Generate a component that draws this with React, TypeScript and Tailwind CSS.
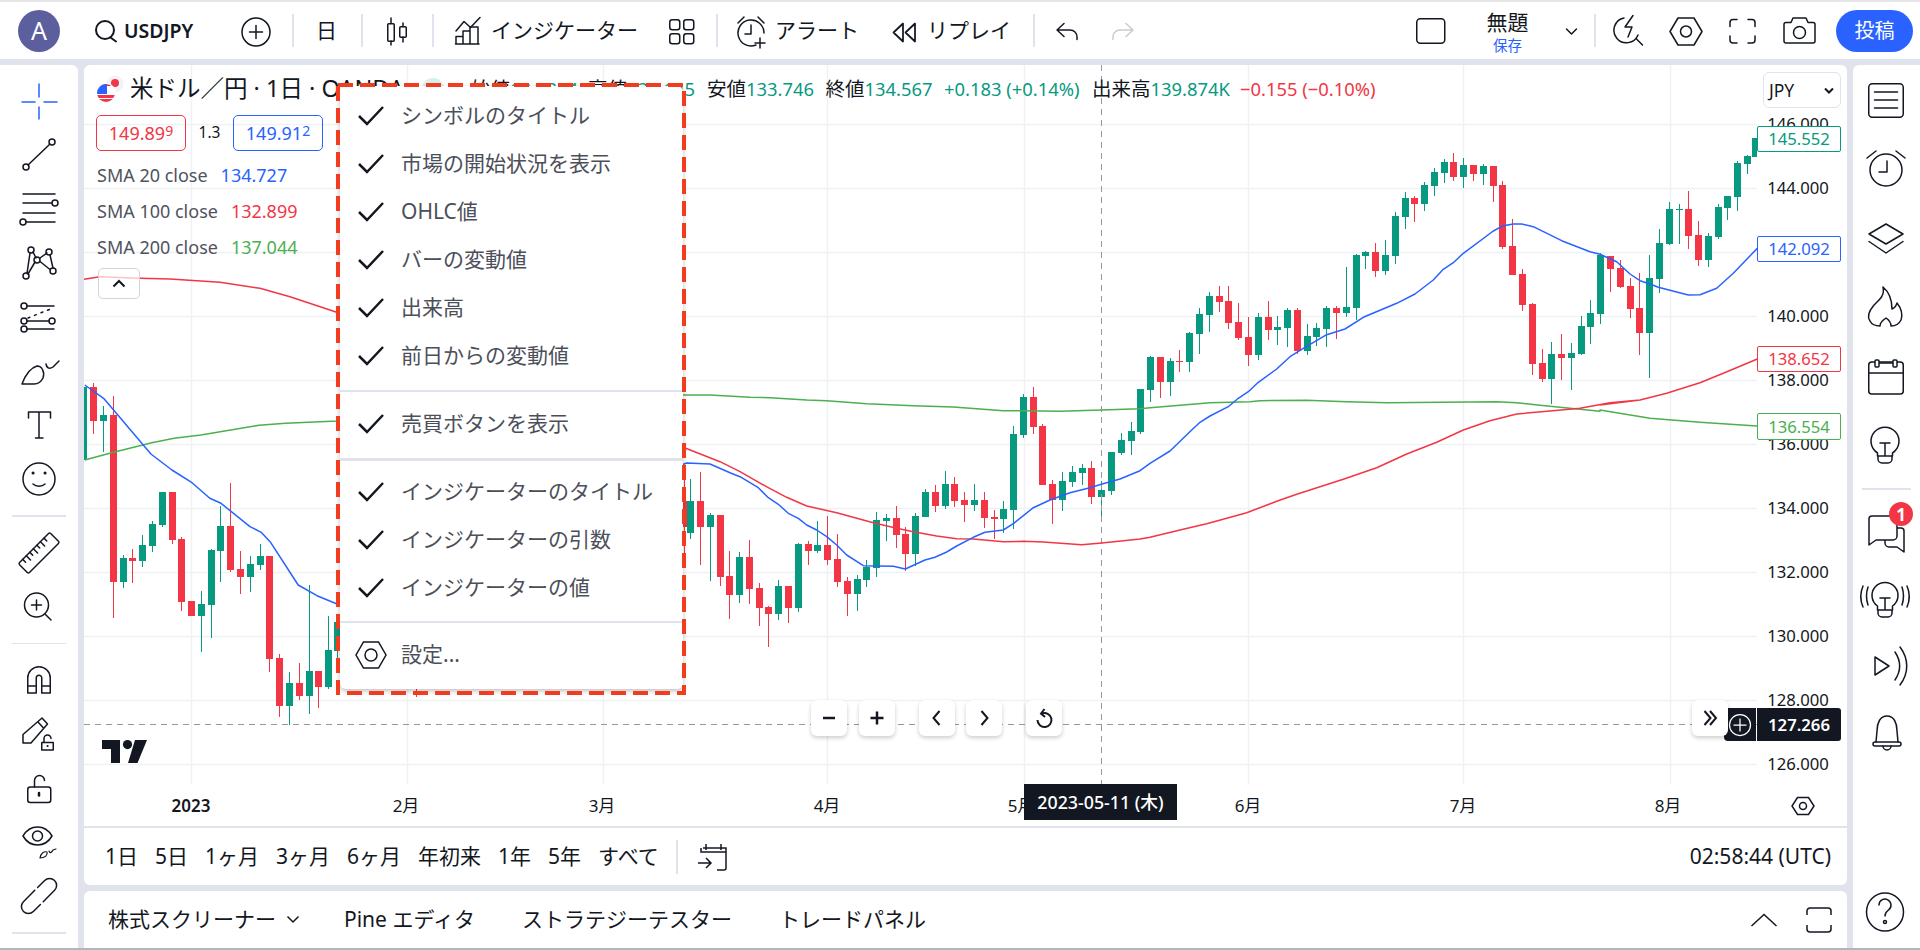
import type { ReactNode } from "react";

const TEAL = "#089981";
const RED = "#f23645";
const BLUE = "#2962ff";
const GREEN = "#4caf50";

type Row = [number, number, number, number, number, "g" | "r"];

// candles as [x, high, bodyTop, bodyBottom, low, colour], read off crops at 3x
const frame = (ox: number, oy: number, s: number, rows: Row[]) =>
  rows.map(([x, h, t, b, l, c]) => ({
    x: Math.floor(ox + x / s),
    h: Math.round(oy + h / s),
    t: Math.round(oy + t / s),
    b: Math.round(oy + b / s),
    l: Math.round(oy + l / s),
    c: c === "g" ? TEAL : RED,
  }));

const candles = [
  ...frame(0, 0, 1, [
    [83, 387, 387, 460, 460, "g"], [93, 383, 387, 421, 434, "r"], [103, 406, 415, 421, 452, "g"],
    [113, 396, 415, 582, 618, "r"], [123, 555, 558, 582, 588, "g"], [132, 549, 558, 561, 583, "r"],
    [142, 535, 545, 561, 567, "g"], [152, 521, 524, 546, 552, "g"], [162, 492, 492, 525, 527, "g"],
    [172, 492, 492, 540, 544, "r"], [181, 537, 539, 602, 611, "r"], [191, 601, 601, 616, 616, "r"],
    [201, 591, 604, 616, 652, "g"], [211, 549, 550, 605, 638, "g"], [220, 506, 526, 551, 582, "g"],
    [230, 483, 526, 570, 572, "r"], [240, 551, 569, 577, 594, "r"], [250, 556, 564, 577, 592, "g"],
    [260, 544, 556, 565, 570, "g"], [269, 556, 556, 659, 672, "r"], [279, 654, 658, 706, 717, "r"],
    [289, 672, 683, 706, 725, "g"], [299, 663, 683, 696, 700, "r"], [309, 585, 671, 696, 714, "g"],
    [318, 671, 671, 687, 708, "r"], [328, 616, 650, 687, 689, "g"], [337, 622, 622, 651, 660, "g"],
    [416, 680, 680, 680, 697, "r"], [684, 472, 501, 527, 560, "r"],
  ]),
  ...frame(680, 340, 3, [
    [31, 417, 483, 579, 597, "g"], [61, 396, 483, 561, 675, "r"], [91, 519, 525, 561, 723, "g"],
    [121, 525, 525, 711, 738, "r"], [148, 633, 708, 765, 837, "r"], [178, 636, 651, 765, 789, "g"],
    [208, 600, 651, 747, 792, "r"], [238, 729, 744, 804, 858, "r"], [265, 798, 801, 822, 921, "r"],
    [295, 720, 738, 822, 840, "g"], [325, 738, 738, 804, 849, "r"], [355, 609, 612, 804, 816, "g"],
    [385, 603, 612, 633, 675, "r"], [412, 543, 615, 633, 639, "g"], [442, 528, 615, 660, 675, "r"],
    [472, 582, 657, 726, 741, "r"], [502, 711, 723, 762, 828, "r"], [532, 705, 717, 762, 813, "g"],
    [559, 660, 681, 720, 741, "g"], [589, 516, 540, 684, 711, "g"], [619, 522, 534, 543, 603, "g"],
    [649, 498, 534, 585, 624, "r"], [676, 561, 582, 642, 693, "r"], [706, 519, 528, 642, 678, "g"],
    [736, 447, 456, 531, 531, "g"], [766, 435, 456, 498, 516, "r"], [796, 393, 432, 498, 507, "g"],
    [823, 411, 432, 483, 501, "r"], [853, 456, 480, 495, 546, "r"], [883, 432, 480, 495, 513, "g"],
    [913, 456, 480, 534, 564, "r"], [943, 510, 531, 537, 597, "r"], [970, 483, 507, 537, 579, "g"],
    [1000, 258, 282, 510, 567, "g"], [1030, 162, 171, 285, 294, "g"], [1060, 141, 171, 261, 282, "r"],
    [1087, 252, 258, 435, 435, "r"], [1117, 420, 432, 480, 552, "r"], [1147, 396, 423, 480, 513, "g"],
    [1177, 378, 396, 426, 441, "g"], [1207, 372, 384, 399, 435, "g"], [1234, 363, 384, 471, 492, "r"],
    [1264, 423, 450, 471, 528, "g"], [1294, 336, 336, 453, 465, "g"], [1324, 279, 300, 339, 345, "g"],
    [1354, 246, 273, 303, 345, "g"], [1381, 147, 147, 276, 282, "g"], [1411, 48, 51, 150, 186, "g"],
    [1441, 51, 51, 126, 174, "r"], [1471, 54, 63, 126, 168, "g"],
  ]),
  ...frame(1150, 130, 3, [
    [88, 660, 693, 696, 726, "r"], [118, 606, 609, 696, 726, "g"], [148, 534, 552, 612, 672, "g"],
    [178, 486, 498, 555, 606, "g"], [208, 468, 498, 516, 546, "r"], [235, 468, 513, 579, 597, "r"],
    [265, 519, 576, 624, 630, "r"], [295, 561, 621, 675, 708, "r"], [325, 549, 561, 675, 690, "g"],
    [355, 513, 561, 600, 630, "r"], [382, 558, 591, 600, 645, "g"], [412, 534, 540, 594, 651, "g"],
    [442, 534, 540, 663, 672, "r"], [472, 582, 618, 663, 675, "g"], [499, 579, 594, 621, 648, "g"],
    [529, 528, 534, 597, 651, "g"], [559, 528, 534, 549, 627, "r"], [589, 411, 531, 549, 561, "g"],
    [619, 372, 375, 534, 570, "g"], [646, 363, 366, 378, 417, "g"], [676, 339, 366, 423, 441, "r"],
    [706, 330, 375, 423, 435, "g"], [736, 246, 258, 378, 402, "g"], [766, 186, 204, 261, 297, "g"],
    [793, 198, 204, 222, 276, "r"], [823, 156, 165, 222, 243, "g"], [853, 114, 126, 168, 198, "g"],
    [883, 87, 96, 129, 159, "g"], [910, 69, 96, 141, 153, "r"], [940, 84, 105, 141, 174, "g"],
    [970, 105, 105, 132, 153, "r"], [1000, 102, 108, 132, 165, "g"], [1030, 108, 108, 168, 216, "r"],
    [1057, 153, 165, 351, 357, "r"], [1087, 267, 348, 435, 435, "r"], [1117, 417, 432, 525, 543, "r"],
    [1147, 519, 522, 702, 735, "r"], [1177, 657, 699, 747, 756, "r"], [1204, 636, 672, 747, 822, "g"],
    [1234, 612, 672, 684, 750, "r"], [1264, 639, 669, 684, 780, "g"], [1294, 558, 588, 672, 675, "g"],
    [1321, 510, 549, 591, 642, "g"], [1351, 369, 375, 552, 582, "g"], [1381, 378, 378, 417, 486, "r"],
    [1411, 390, 414, 471, 474, "r"], [1441, 444, 468, 537, 564, "r"], [1468, 429, 534, 609, 675, "r"],
    [1498, 375, 444, 609, 744, "g"],
  ]),
  ...frame(1600, 60, 3, [
    [178, 507, 549, 657, 699, "g"], [208, 426, 447, 552, 555, "g"], [238, 432, 447, 450, 552, "g"],
    [265, 393, 447, 528, 567, "r"], [295, 483, 525, 600, 618, "r"], [325, 519, 528, 600, 621, "g"],
    [355, 432, 441, 531, 537, "g"], [382, 408, 408, 444, 480, "g"], [412, 303, 309, 411, 453, "g"],
    [442, 285, 288, 312, 342, "g"], [466, 234, 234, 291, 291, "g"],
  ]),
];

const pts = (ox: number, oy: number, sx: number, sy: number, list: number[][]) =>
  list.map(([x, y]) => `${(ox + x / sx).toFixed(1)},${(oy + y / sy).toFixed(1)}`).join(" ");

const blueLine = [
  pts(0, 300, 2.24, 3, [[190, 255], [232, 295], [338, 462], [385, 510], [430, 548], [470, 595], [495, 610], [560, 680], [585, 697], [605, 725], [668, 855], [710, 887], [755, 912]]),
  pts(680, 340, 3, 3, [[20, 369], [90, 372], [150, 398], [180, 410], [235, 443], [265, 473], [295, 493], [325, 520], [355, 535], [380, 555], [410, 570], [440, 590], [470, 615], [500, 645], [550, 677], [640, 679], [676, 687], [735, 660], [765, 652], [800, 636], [830, 618], [880, 592], [915, 577], [970, 570], [1000, 551], [1060, 503], [1110, 480], [1170, 458], [1230, 443], [1264, 433], [1320, 417], [1380, 392], [1410, 370], [1470, 333]]),
  pts(1150, 130, 3, 3, [[125, 900], [150, 877], [180, 858], [235, 830], [265, 805], [295, 785], [325, 757], [380, 717], [420, 680], [460, 655], [530, 614], [585, 597], [640, 562], [740, 520], [795, 492], [850, 450], [880, 418], [910, 398], [940, 370], [1030, 303], [1060, 287], [1090, 282], [1115, 282], [1150, 290], [1235, 332], [1320, 365], [1350, 373], [1400, 395], [1440, 432], [1470, 452]]),
  pts(1600, 60, 3, 3, [[150, 672], [175, 682], [265, 705], [300, 704], [350, 685], [400, 640], [472, 565]]),
].join(" ");

const redLine = [
  pts(0, 60, 3, 3, [[252, 658], [300, 650], [420, 655], [510, 657], [660, 667], [780, 685], [870, 710], [1010, 757]]),
  pts(680, 340, 3, 3, [[0, 318], [120, 365], [180, 395], [265, 443], [320, 472], [380, 498], [470, 518], [580, 548], [650, 565], [700, 575], [770, 588], [830, 596], [880, 597], [970, 605], [1030, 604], [1090, 606], [1205, 614], [1265, 609], [1380, 597], [1410, 592], [1500, 570]]),
  pts(1150, 380, 3, 3, [[90, 450], [170, 431], [290, 398], [380, 364], [440, 343], [580, 298], [680, 263], [770, 222], [860, 187], [940, 150], [1020, 122], [1100, 102], [1200, 93]]),
  pts(1150, 130, 3, 3, [[1290, 835], [1380, 818], [1470, 810]]),
  pts(1600, 60, 3, 3, [[0, 1035], [120, 1020], [200, 1000], [300, 968], [370, 940], [472, 897]]),
].join(" ");

const greenLine = [
  pts(0, 300, 2.24, 3, [[190, 480], [250, 458], [340, 428], [390, 415], [450, 405], [580, 376], [640, 370], [755, 363]]),
  pts(680, 340, 3, 3, [[0, 165], [90, 165], [210, 172], [270, 173], [380, 180], [440, 182], [560, 191], [700, 197], [820, 201], [970, 212], [1030, 212], [1140, 214], [1264, 210], [1380, 206]]),
  pts(1150, 130, 3, 3, [[0, 833], [100, 825], [180, 818], [300, 815], [330, 812], [470, 811], [590, 815], [710, 818], [1040, 815], [1100, 818], [1170, 826], [1290, 838], [1350, 844]]),
  pts(1600, 60, 3, 3, [[0, 1050], [150, 1075], [300, 1087], [472, 1098]]),
].join(" ");

const priceY = (p: number) => 188 + (144 - p) * 32;
const priceTicks = [146, 144, 140, 138, 136, 134, 132, 130, 128, 126];
const monthLines = [191, 407, 603, 827, 1024, 1248, 1463, 1670];
const monthLabels = [
  { x: 191, text: "2023", bold: true },
  { x: 406, text: "2月" },
  { x: 602, text: "3月" },
  { x: 827, text: "4月" },
  { x: 1021, text: "5月" },
  { x: 1248, text: "6月" },
  { x: 1463, text: "7月" },
  { x: 1668, text: "8月" },
];

// icons are drawn in page coordinates, the viewBox cuts out their slot
function Glyph({ x, y, w, h, className, sw = 1.5, children }: { x: number; y: number; w: number; h: number; className?: string; sw?: number; children: ReactNode }) {
  return (
    <svg
      width={w}
      height={h}
      viewBox={`${x} ${y} ${w} ${h}`}
      fill="none"
      stroke="currentColor"
      strokeWidth={sw}
      strokeLinecap="round"
      strokeLinejoin="round"
      className={`flex-none ${className ?? "text-[#131722]"}`}
    >
      {children}
    </svg>
  );
}

const Top = ({ x, w, className, sw, children }: { x: number; w: number; className?: string; sw?: number; children: ReactNode }) => (
  <Glyph x={x} y={2} w={w} h={57} className={className} sw={sw}>
    {children}
  </Glyph>
);

const Left = ({ top, h, children, className }: { top: number; h: number; children: ReactNode; className?: string }) => (
  <Glyph x={0} y={top} w={78} h={h} className={className}>
    {children}
  </Glyph>
);

const Right = ({ top, h, children }: { top: number; h: number; children: ReactNode }) => (
  <Glyph x={1853} y={top} w={67} h={h}>
    {children}
  </Glyph>
);

const Bar = ({ className }: { className: string }) => <div className={`w-[2px] h-[33px] bg-[#e0e3eb] flex-none ${className}`} />;

function Header() {
  return (
    <header className="h-[57px] flex-none bg-white flex items-center text-[#131722] text-[21px]">
      <div className="ml-[18px] w-[42px] h-[42px] rounded-full bg-[#5c5f9e] text-white text-[25px] flex items-center justify-center flex-none">A</div>
      <div className="ml-[34px]">
        <Top x={94} w={24} sw={2}>
          <circle cx="105" cy="30" r="9" />
          <path d="M110.5 37.5 116 41.5" />
        </Top>
      </div>
      <span className="ml-[6px] w-[76px] text-[19.5px] font-semibold flex-none">USDJPY</span>
      <div className="ml-[40px]">
        <Top x={240} w={32}>
          <circle cx="256" cy="32" r="14" />
          <path d="M256 25.5v13M249.5 32h13" />
        </Top>
      </div>
      <Bar className="ml-[20px]" />
      <span className="ml-[22px] w-[21px] flex-none leading-none">日</span>
      <Bar className="ml-[24px]" />
      <div className="ml-[22px]">
        <Top x={385} w={24}>
          <path d="M391 18v5M391 41v4M403 23v3M403 37v5" />
          <rect x="387.75" y="23.75" width="6.5" height="17.5" rx="1" />
          <rect x="399.75" y="26.75" width="6.5" height="10.5" rx="1" />
        </Top>
      </div>
      <Bar className="ml-[23px]" />
      <div className="ml-[20px]">
        <Top x={454} w={28}>
          <path d="M456 31 464 21.5l6.5 6L480 17.5" />
          <path d="M456 44v-7.5h7V44M463 36.5V31h7v13M470 31v-4h8v17M455.5 44H479" />
        </Top>
      </div>
      <span className="ml-[9px] w-[147px] flex-none">インジケーター</span>
      <div className="ml-[29px]">
        <Top x={667} w={28}>
          <rect x="669.75" y="19.75" width="10" height="10" rx="2.5" />
          <rect x="683.75" y="19.75" width="10" height="10" rx="2.5" />
          <rect x="669.75" y="33.75" width="10" height="10" rx="2.5" />
          <rect x="683.75" y="33.75" width="10" height="10" rx="2.5" />
        </Top>
      </div>
      <Bar className="ml-[21px]" />
      <div className="ml-[17px]">
        <Top x={735} w={34}>
          <path d="M756 45A13 13 0 1 1 764 33" />
          <path d="M738 23l6-6M758 17l6 6M751 25v9h-6M760 38v10M755 43h10" />
        </Top>
      </div>
      <span className="ml-[6px] w-[84px] flex-none">アラート</span>
      <div className="ml-[31px]">
        <Top x={890} w={28} sw={1.75}>
          <path d="M903 23.5 893.500 32.500l9.500 9zM915 23.500l-9.500 9 9.500 9z" />
        </Top>
      </div>
      <span className="ml-[9px] w-[84px] flex-none">リプレイ</span>
      <Bar className="ml-[22px]" />
      <div className="ml-[19px]">
        <Top x={1054} w={26}>
          <path d="M1064 23.5 1057 30l7 6.5M1057 30h13c4 0 7 3 7 7v2.5" />
        </Top>
      </div>
      <div className="ml-[31px]">
        <Top x={1111} w={26} className="text-[#c9cbd1]">
          <path d="M1126 23.5l7 6.5-7 6.5M1133 30h-13c-4 0-7 3-7 7v2.5" />
        </Top>
      </div>
      <div className="ml-[278px]">
        <Top x={1415} w={31}>
          <rect x="1416.75" y="18.75" width="28" height="24.5" rx="3.5" />
        </Top>
      </div>
      <div className="ml-[21px] w-[81px] flex-none flex flex-col items-center pt-[1px]">
        <span className="text-[21px] leading-[27px]">無題</span>
        <span className="text-[14.5px] leading-[18px] text-[#2962ff]">保存</span>
      </div>
      <div className="ml-[16px]">
        <Top x={1564} w={15}>
          <path d="M1566.5 29l5 5 5-5" />
        </Top>
      </div>
      <Bar className="ml-[15px]" />
      <div className="ml-[17px]">
        <Top x={1613} w={32}>
          <path d="M1624 18A12.500 12.500 0 1 0 1638 35" />
          <path d="M1633 15.5 1625 27h7l-4 10M1636 38.5l6.5 6.5" />
        </Top>
      </div>
      <div className="ml-[23px]">
        <Top x={1668} w={36}>
          <path d="M1678 18h16l8 13.500-8 13.500h-16l-8-13.500z" />
          <circle cx="1686" cy="31.500" r="5.500" />
        </Top>
      </div>
      <div className="ml-[24px]">
        <Top x={1728} w={29}>
          <path d="M1737 19.500h-4a3 3 0 0 0-3 3v4M1748 19.500h4a3 3 0 0 1 3 3v4M1737 43h-4a3 3 0 0 1-3-3v-4M1748 43h4a3 3 0 0 0 3-3v-4" />
        </Top>
      </div>
      <div className="ml-[25px]">
        <Top x={1782} w={35}>
          <path d="M1791 22.500l2-4.500h13l2 4.500h5a2 2 0 0 1 2 2V41a2 2 0 0 1-2 2h-27a2 2 0 0 1-2-2V24.500a2 2 0 0 1 2-2z" />
          <circle cx="1799.500" cy="32.500" r="6" />
        </Top>
      </div>
      <div className="ml-[19px] w-[77px] h-[42px] rounded-full bg-[#2962ff] text-white text-[20px] flex items-center justify-center flex-none">投稿</div>
    </header>
  );
}

function LeftBar() {
  return (
    <aside className="w-[78px] flex-none bg-white rounded-tr-[6px] flex flex-col pt-[10px]">
      <Left top={75} h={53} className="text-[#2962ff]">
        <path d="M22 102h13M44 102h13M39 84v13M39 107v12" />
      </Left>
      <Left top={128} h={50}>
        <circle cx="52" cy="142" r="3" />
        <circle cx="26" cy="167" r="3" />
        <path d="M50 144 28 165" />
      </Left>
      <Left top={178} h={60}>
        <path d="M23 194h32M23 203h29M23 213h32M26 222h29" />
        <circle cx="55" cy="203" r="3" />
        <circle cx="23" cy="222" r="3" />
      </Left>
      <Left top={238} h={48}>
        <path d="M27 273.500 30 253M33 252l3 6M35 262l-7 12M40 258l7-5M50 255l3 13M40 261.500l10 8" />
        <circle cx="26" cy="276" r="3" />
        <circle cx="31" cy="250" r="3" />
        <circle cx="37" cy="260" r="3" />
        <circle cx="49" cy="252" r="3" />
        <circle cx="53" cy="271" r="3" />
      </Left>
      <Left top={286} h={64}>
        <circle cx="24" cy="306" r="3" />
        <circle cx="24" cy="321" r="3" />
        <circle cx="24" cy="329" r="3" />
        <circle cx="52" cy="321" r="3" />
        <path d="M27 306h27M27 321h22M27 329h27" />
        <path d="M28 318l25-10" strokeDasharray="2 5" />
      </Left>
      <Left top={350} h={44}>
        <path d="M22 384c3-8 8-16 15-18 5 0 8 6 6 12-2 4-5 6-9 6zM46 364c1 5 4 5 7 3l6-6" />
      </Left>
      <Left top={394} h={62}>
        <path d="M28.500 418v-6h22v6M39 412v26M35.500 438H43" />
      </Left>
      <Left top={456} h={46}>
        <circle cx="39" cy="479" r="16" />
        <path d="M33 484c3 3 9 3 12 0" />
        <path d="M33 473h.1M45 473h.1" strokeWidth="3" />
      </Left>
      <div className="mt-[13px] mx-[12px] h-[2px] bg-[#e0e3eb]" />
      <Left top={517} h={72}>
        <g transform="rotate(-45 39 553)">
          <rect x="17" y="546" width="44" height="14" rx="1.500" />
          <path d="M23 546v4M28 546v6M33 546v4M38 546v6M43 546v4M48 546v6M53 546v4" />
        </g>
      </Left>
      <Left top={589} h={34}>
        <circle cx="36.500" cy="605" r="12" />
        <path d="M36.500 600v10M31.500 605h10M45 614l6 6" />
      </Left>
      <div className="mt-[20px] mx-[12px] h-px bg-[#e0e3eb]" />
      <Left top={644} h={70}>
        <path d="M27.750 693V678a11.250 11.250 0 0 1 22.500 0v15h-8.500V678a2.750 2.750 0 0 0-5.500 0v15zM27.750 686h8.500M41.750 686h8.500" />
      </Left>
      <Left top={714} h={42}>
        <path d="M23 743v-8.500L42 718l5.500 6L31 743zM38 722l5.500 6" />
        <path d="M41.750 742.500h11.500v7.500h-11.500zM44 742.500v-4a3.500 3.500 0 0 1 7 0" />
        <path d="M47.500 746h.1" strokeWidth="2" />
      </Left>
      <Left top={756} h={68}>
        <rect x="27.750" y="787" width="23" height="15.500" rx="2.500" />
        <path d="M34.500 787v-6.500a5 5 0 0 1 10 0" />
        <path d="M39 793v2.500" strokeWidth="2.500" />
      </Left>
      <Left top={824} h={38}>
        <path d="M23 836c7-12 22-12 29 0-7 12-22 12-29 0z" />
        <circle cx="37.500" cy="836" r="5" />
        <path d="M40 858c1-5 4-7 7-6 1 3-2 6-7 6zM49 851c1 3 3 1 4-1l3-1" strokeWidth="1.200" />
      </Left>
      <Left top={862} h={68}>
        <g transform="rotate(-45 39 896)">
          <path d="M40 889H24a7 7 0 0 0 0 14h10M38 903h16a7 7 0 0 0 0-14H44" />
        </g>
      </Left>
      <div className="mt-[2px] mx-[12px] h-[2px] bg-[#e0e3eb]" />
    </aside>
  );
}

function RightBar() {
  return (
    <aside className="ml-[6px] w-[67px] flex-none bg-white rounded-tl-[6px] flex flex-col pt-[5px]">
      <Right top={70} h={65}>
        <rect x="1868.750" y="83.750" width="34.500" height="33.500" rx="3.500" />
        <path d="M1874.500 92h23M1874.500 100h23M1874.500 108h23" />
      </Right>
      <Right top={135} h={70}>
        <circle cx="1886" cy="170" r="16" />
        <path d="M1887 161v11h-8M1867 158l9-7M1896 151l9 7" />
      </Right>
      <Right top={205} h={67}>
        <path d="M1886 224l17 10-17 10-17-10zM1869 241.500l17 11.500 17-11.500" />
      </Right>
      <Right top={272} h={70}>
        <path d="M1883 287c2 9-4 13-9 18-5 6-7 12-4 16 2 4 6 5 10 5 0-4 3-6 6-8 3 2 5 4 5 8 4 0 8-2 10-6 2-6 0-12-4-17-1 3-2 5-5 6 0-8-3-17-9-22z" />
      </Right>
      <Right top={342} h={70}>
        <rect x="1868.750" y="362" width="34.500" height="32" rx="3" />
        <path d="M1869 373h34M1879 363h14" />
        <rect x="1875" y="360" width="4" height="7" rx="1" fill="white" />
        <rect x="1893" y="360" width="4" height="7" rx="1" fill="white" />
      </Right>
      <Right top={412} h={66}>
        <path d="M1877.500 453a14 14 0 1 1 15 0v3h-15zM1878 456h14v3a4 4 0 0 1-4 4h-6a4 4 0 0 1-4-4zM1880 443h10M1885 443v12" />
      </Right>
      <div className="mt-[10px] mx-[9px] h-[2px] bg-[#e0e3eb]" />
      <div className="relative">
        <Right top={490} h={75}>
          <path d="M1897 531V519a3 3 0 0 0-3-3h-22a3 3 0 0 0-3 3v26l7-5h17a4 4 0 0 0 4-4zM1897 528h4a3 3 0 0 1 3 3v21l-7-5h-8a4 4 0 0 1-4-4v-3" />
        </Right>
        <span className="absolute left-[36px] top-[12px] w-[24px] h-[24px] rounded-full bg-[#f23645] text-white text-[17px] font-bold flex items-center justify-center leading-none">1</span>
      </div>
      <Right top={565} h={65}>
        <path d="M1877.500 606a13 13 0 1 1 15 0v4h-15zM1878 610h14v3a4 4 0 0 1-4 4h-6a4 4 0 0 1-4-4zM1880 598h10M1885 598v11" />
        <path d="M1868 587c-2 6-2 12 0 18M1863 586c-3 7-3 14 0 21M1902 587c2 6 2 12 0 18M1907 586c3 7 3 14 0 21" />
      </Right>
      <Right top={630} h={70}>
        <path d="M1875 657v18l14-9zM1895 652c6 9 6 19 0 28M1900 647c9 12 9 26 0 38" />
      </Right>
      <Right top={700} h={70}>
        <path d="M1887 716c-7 0-10 7-10 15l-1 11M1887 716c7 0 10 7 10 15l1 11" />
        <rect x="1873" y="742" width="28" height="4" rx="2" />
        <path d="M1883 746a4 4 0 0 0 8 0" />
      </Right>
      <div className="mt-auto pb-[8px]">
        <Right top={885} h={55}>
          <ellipse cx="1885" cy="912" rx="18.500" ry="19" />
          <path d="M1879 905a6 6 0 1 1 9.500 5c-2 1.500-3.500 3-3.500 6" />
          <circle cx="1885" cy="922" r="1.500" />
        </Right>
      </div>
    </aside>
  );
}

function ChartCanvas() {
  return (
    <svg width={1673} height={719} viewBox="84 65 1673 719" className="absolute left-0 top-0">
      {priceTicks.concat(142).map((p) => (
        <line key={p} x1={84} x2={1757} y1={priceY(p) + 0.5} y2={priceY(p) + 0.5} stroke="#f0f1f4" strokeWidth={1.5} />
      ))}
      {monthLines.map((x) => (
        <line key={x} x1={x + 0.5} x2={x + 0.5} y1={65} y2={784} stroke="#f0f1f4" strokeWidth={1.5} />
      ))}
      <line x1={84} x2={1757} y1={724.5} y2={724.5} stroke="#9598a1" strokeWidth={1} strokeDasharray="6 5" />
      <g shapeRendering="crispEdges">
        {candles.map((c, i) => (
          <g key={i} fill={c.c}>
            <rect x={c.x} y={c.h} width={1} height={c.l - c.h} />
            {c.b > c.t && <rect x={c.x - 3} y={c.t} width={7} height={c.b - c.t} />}
          </g>
        ))}
      </g>
      <line x1={1101.5} x2={1101.5} y1={65} y2={784} stroke="#9598a1" strokeWidth={1} strokeDasharray="6 5" />
      <polyline points={greenLine} fill="none" stroke={GREEN} strokeWidth={1.5} strokeLinejoin="round" />
      <polyline points={redLine} fill="none" stroke={RED} strokeWidth={1.5} strokeLinejoin="round" />
      <polyline points={blueLine} fill="none" stroke={BLUE} strokeWidth={1.5} strokeLinejoin="round" />
      <path d="M102 740h18v23h-9v-14h-9z" fill="#131722" />
      <circle cx={127.500} cy={744.600} r={4.600} fill="#131722" />
      <path d="M135 740h12l-9.500 23H128z" fill="#131722" />
    </svg>
  );
}

function Legend() {
  return (
    <div className="absolute left-0 top-0 pl-[12px] pt-[8px] text-[18px] text-[#131722]">
      <div className="h-[32px] flex items-center whitespace-nowrap text-[18.400px]">
        <svg width={28} height={30} viewBox="96 76 28 30" className="flex-none">
          <defs>
            <clipPath id="usd">
              <circle cx={106} cy={95} r={9} />
            </clipPath>
          </defs>
          <circle cx={115} cy={86} r={8.500} fill="#f0f3fa" />
          <circle cx={115} cy={85} r={4} fill="#f23645" />
          <circle cx={106} cy={95} r={10} fill="white" />
          <g clipPath="url(#usd)">
            <rect x={96} y={85} width={20} height={20} fill="white" />
            <rect x={96} y={85} width={20} height={3} fill="#f23645" />
            <rect x={96} y={97} width={20} height={3} fill="#f23645" />
            <rect x={96} y={101} width={20} height={4} fill="#f23645" />
            <rect x={96} y={86} width={11} height={10} fill="#2962ff" />
          </g>
        </svg>
        <span className="ml-[6px] w-[292px] flex-none text-[23.500px] leading-none">米ドル／円 · 1日 · OANDA</span>
        <span className="w-[22px] h-[22px] rounded-full bg-[#d6f0ea] flex-none" />
        <span className="ml-[27px] w-[117px] flex-none"><span className="text-[19.500px]">始値</span><span className="text-[#089981]">134.384</span></span>
        <span className="w-[119px] flex-none"><span className="text-[19.500px]">高値</span><span className="text-[#089981]">135.145</span></span>
        <span className="w-[118.500px] flex-none"><span className="text-[19.500px]">安値</span><span className="text-[#089981]">133.746</span></span>
        <span className="w-[118.500px] flex-none"><span className="text-[19.500px]">終値</span><span className="text-[#089981]">134.567</span></span>
        <span className="w-[148px] flex-none text-[#089981]">+0.183 (+0.14%)</span>
        <span className="w-[148px] flex-none"><span className="text-[19.500px]">出来高</span><span className="text-[#089981]">139.874K</span></span>
        <span className="text-[#f23645]">−0.155 (−0.10%)</span>
      </div>
      <div className="mt-[10px] flex items-center">
        <div className="w-[90px] h-[36px] border border-[#f23645] rounded-[5px] text-[#f23645] flex items-center justify-center">
          149.89<span className="text-[14px] -mt-[6px]">9</span>
        </div>
        <span className="w-[47px] text-center text-[15.500px]">1.3</span>
        <div className="w-[90px] h-[36px] border border-[#2962ff] rounded-[5px] text-[#2962ff] flex items-center justify-center">
          149.91<span className="text-[14px] -mt-[6px]">2</span>
        </div>
      </div>
      <div className="mt-[6px] ml-[1px] flex flex-col text-[#50535e]">
        <div className="h-[36px] flex items-center gap-[13px]">SMA 20 close<span className="text-[#2962ff]">134.727</span></div>
        <div className="h-[36px] flex items-center gap-[13px]">SMA 100 close<span className="text-[#f23645]">132.899</span></div>
        <div className="h-[36px] flex items-center gap-[13px]">SMA 200 close<span className="text-[#4caf50]">137.044</span></div>
      </div>
      <div className="mt-[3px] ml-[2px] w-[42px] h-[31px] border border-[#d1d4dc] rounded-[5px] bg-white/70 flex items-center justify-center">
        <svg width={14} height={9} viewBox="0 0 14 9" fill="none" stroke="#131722" strokeWidth={2}>
          <path d="M1.500 7.500 7 2l5.500 5.500" />
        </svg>
      </div>
    </div>
  );
}

function MenuRow({ label }: { label: string }) {
  return (
    <div className="h-[48px] flex items-center pl-[18px]">
      <svg width={26} height={20} viewBox="0 0 26 20" fill="none" stroke="#131722" strokeWidth={2.500} className="flex-none">
        <path d="M1 10l8 8L25 1" />
      </svg>
      <span className="ml-[17px]">{label}</span>
    </div>
  );
}

function ContextMenu() {
  return (
    <>
      <div className="absolute left-[256px] top-[21px] w-[343px] h-[603px] bg-white rounded-[6px] shadow-[0_2px_5px_rgba(0,0,0,0.25)] pt-[6px] text-[21px] text-[#4c4f5a]">
        {["シンボルのタイトル", "市場の開始状況を表示", "OHLC値", "バーの変動値", "出来高", "前日からの変動値"].map((t) => (
          <MenuRow key={t} label={t} />
        ))}
        <div className="mt-[10px] h-[2px] bg-[#e0e3eb]" />
        <div className="mt-[8px]">
          <MenuRow label="売買ボタンを表示" />
        </div>
        <div className="mt-[10px] h-[3px] bg-[#e0e3eb]" />
        <div className="mt-[7px]">
          {["インジケーターのタイトル", "インジケーターの引数", "インジケーターの値"].map((t) => (
            <MenuRow key={t} label={t} />
          ))}
        </div>
        <div className="mt-[9px] h-[2px] bg-[#e0e3eb]" />
        <div className="mt-[8px] h-[48px] flex items-center pl-[15px]">
          <svg width={32} height={28} viewBox="0 0 32 28" fill="none" stroke="#131722" strokeWidth={1.500} className="flex-none">
            <path d="M8.500 1h15L31 14l-7.500 13h-15L1 14z" />
            <circle cx={16} cy={14} r={6} />
          </svg>
          <span className="ml-[14px]">設定...</span>
        </div>
      </div>
      <svg width={356} height={616} viewBox="333 80 356 616" fill="none" className="absolute left-[249px] top-[15px] pointer-events-none">
        <rect x={338} y={85} width={346} height={608} stroke="#f23c1f" strokeWidth={4} strokeDasharray="15 7" />
      </svg>
    </>
  );
}

const ToolBtn = ({ className, children }: { className: string; children: ReactNode }) => (
  <div className={`w-[36px] h-[36px] flex-none bg-white rounded-[6px] shadow-[0_2px_4px_rgba(0,0,0,0.2)] flex items-center justify-center text-[#131722] ${className}`}>
    <svg width={22} height={22} viewBox="0 0 22 22" fill="none" stroke="currentColor" strokeWidth={2}>
      {children}
    </svg>
  </div>
);

const priceBoxes = [
  { top: 61, h: 26, text: "145.552", cls: "border-[#089981] text-[#089981]" },
  { top: 171, h: 26, text: "142.092", cls: "border-[#2962ff] text-[#2962ff]" },
  { top: 281, h: 26, text: "138.652", cls: "border-[#f23645] text-[#f23645]" },
  { top: 348, h: 27, text: "136.554", cls: "border-[#4caf50] text-[#4caf50]" },
];

function PriceScale() {
  return (
    <>
      {priceTicks.map((p) => (
        <span
          key={p}
          className="absolute left-[1673px] w-[84px] h-[24px] leading-[24px] text-center text-[16.700px] text-[#131722] pr-[2px]"
          style={{ top: priceY(p) - 65 - 12 }}
        >
          {p.toFixed(3)}
        </span>
      ))}
      {priceBoxes.map((b) => (
        <span
          key={b.text}
          className={`absolute left-[1673px] w-[84px] bg-white border rounded-[2px] flex items-center justify-center text-[16.700px] ${b.cls}`}
          style={{ top: b.top, height: b.h }}
        >
          {b.text}
        </span>
      ))}
      <div className="absolute left-[1640px] top-[643px] w-[32px] h-[33px] bg-[#131722] rounded-l-[4px] flex items-center justify-center">
        <svg width={24} height={24} viewBox="0 0 24 24" fill="none" stroke="white" strokeWidth={1.250}>
          <circle cx={12} cy={12} r={10.500} />
          <path d="M12 5.500v13M5.500 12h13" />
        </svg>
      </div>
      <span className="absolute left-[1673px] top-[643px] w-[84px] h-[33px] bg-[#131722] rounded-r-[3px] text-white text-[16.700px] font-semibold flex items-center justify-center">127.266</span>
      <div className="absolute left-[1679px] top-[7px] w-[78px] h-[36px] border border-[#e0e3eb] rounded-[6px] bg-white flex items-center justify-between pl-[5px] pr-[6px] text-[17.500px] text-[#131722]">
        JPY
        <svg width={10} height={7} viewBox="0 0 10 7" fill="none" stroke="#131722" strokeWidth={2}>
          <path d="M1 1.500l4 4 4-4" />
        </svg>
      </div>
    </>
  );
}

function ChartButtons() {
  return (
    <>
      <div className="absolute left-[727px] top-[635px] flex">
        <ToolBtn className="">
          <path d="M5 11h12" strokeWidth={2.500} />
        </ToolBtn>
        <ToolBtn className="ml-[12px]">
          <path d="M4.500 11h13M11 4.500v13" strokeWidth={2.500} />
        </ToolBtn>
        <ToolBtn className="ml-[24px]">
          <path d="M13.500 4 7.500 11l6 7" />
        </ToolBtn>
        <ToolBtn className="ml-[11px]">
          <path d="M8.500 4l6 7-6 7" />
        </ToolBtn>
        <ToolBtn className="ml-[24px]">
          <path d="M9 6.500a7 7 0 1 1-4.500 6.500M11.500 2 8 6.500 12 10" />
        </ToolBtn>
      </div>
      <ToolBtn className="absolute left-[1608px] top-[635px]">
        <path d="M5.500 4l6 7-6 7M11 4l6 7-6 7" />
      </ToolBtn>
    </>
  );
}

function TimeAxis() {
  return (
    <div className="relative h-[42px] flex-none bg-white text-[17px] text-[#131722]">
      {monthLabels.map((m) => (
        <span
          key={m.x}
          className={`absolute top-[9px] w-[60px] text-center leading-[26px] ${m.bold ? "font-semibold" : ""}`}
          style={{ left: m.x - 84 - 30 }}
        >
          {m.text}
        </span>
      ))}
      <span className="absolute left-[940px] top-0 w-[153px] h-[36px] bg-[#131722] text-white text-[17.800px] font-medium flex items-center justify-center">2023-05-11 (木)</span>
      <svg width={24} height={20} viewBox="0 0 24 20" fill="none" stroke="#131722" strokeWidth={1.500} className="absolute left-[1707px] top-[12px]">
        <path d="M6.500 1.500h11L23 10l-5.500 8.500h-11L1 10z" />
        <circle cx={12} cy={10} r={3.500} />
      </svg>
    </div>
  );
}

function RangeBar() {
  return (
    <div className="h-[59px] flex-none bg-white rounded-b-[6px] border-t-[2px] border-[#e0e3eb] flex items-center text-[21px] text-[#131722] pl-[21px]">
      <div className="flex gap-[17px]">
        {["1日", "5日", "1ヶ月", "3ヶ月", "6ヶ月", "年初来", "1年", "5年", "すべて"].map((t) => (
          <span key={t}>{t}</span>
        ))}
      </div>
      <div className="ml-[17px] w-[2px] h-[34px] bg-[#e0e3eb]" />
      <svg width={30} height={28} viewBox="0 0 30 28" fill="none" stroke="#131722" strokeWidth={1.500} className="ml-[19px]">
        <path d="M6 5h23V25a2 2 0 0 1-2 2h-7M29 9H4V5M9 1v6M24 1v6M1 20h13M9 15l5 5-5 5" />
      </svg>
      <span className="ml-auto pr-[16px] text-[21px]">02:58:44 (UTC)</span>
    </div>
  );
}

function BottomPanel() {
  return (
    <div className="h-[57px] flex-none mt-[6px] bg-white rounded-t-[6px] flex items-center text-[21px] text-[#131722] whitespace-nowrap">
      <span className="ml-[24px] w-[168px] flex-none">株式スクリーナー</span>
      <svg width={14} height={9} viewBox="0 0 14 9" fill="none" stroke="#131722" strokeWidth={1.500} className="ml-[10px]">
        <path d="M1.500 1.500 7 7l5.500-5.500" />
      </svg>
      <span className="ml-[44px] w-[130px] flex-none">Pine エディタ</span>
      <span className="ml-[48px] w-[210px] flex-none">ストラテジーテスター</span>
      <span className="ml-[47px]">トレードパネル</span>
      <svg width={28} height={14} viewBox="0 0 28 14" fill="none" stroke="#131722" strokeWidth={1.500} className="ml-auto">
        <path d="M1.500 13 14 1.500 26.500 13" />
      </svg>
      <svg width={26} height={26} viewBox="0 0 26 26" fill="none" stroke="#131722" strokeWidth={1.500} className="ml-[28px] mr-[15px]">
        <path d="M1 8V4a3 3 0 0 1 3-3h18a3 3 0 0 1 3 3v4M1 18v4a3 3 0 0 0 3 3h18a3 3 0 0 0 3-3v-4" />
      </svg>
    </div>
  );
}

export default function App() {
  return (
    <div className="w-[1920px] h-[950px] overflow-hidden bg-[#e0e3eb] flex flex-col font-['Noto_Sans','Noto_Sans_CJK_JP',sans-serif]">
      <div className="h-[2px] flex-none bg-[#e6e6e6]" />
      <Header />
      <div className="mt-[6px] flex flex-1 min-h-0">
        <LeftBar />
        <main className="ml-[6px] w-[1763px] flex-none flex flex-col">
          <div className="relative h-[719px] flex-none bg-white rounded-t-[6px] overflow-hidden">
            <ChartCanvas />
            <Legend />
            <PriceScale />
            <ChartButtons />
            <ContextMenu />
          </div>
          <TimeAxis />
          <RangeBar />
          <BottomPanel />
        </main>
        <RightBar />
      </div>
      <div className="h-[2px] flex-none bg-[#b2b5be]" />
    </div>
  );
}
